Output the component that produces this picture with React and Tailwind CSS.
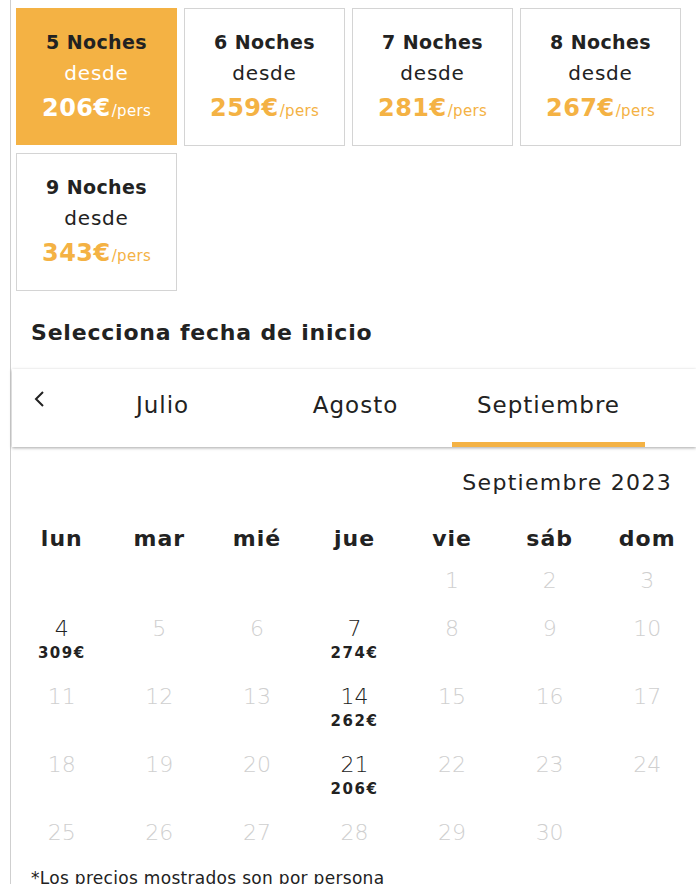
import { useState } from "react";

const nights = [
  { n: 5, price: 206 },
  { n: 6, price: 259 },
  { n: 7, price: 281 },
  { n: 8, price: 267 },
  { n: 9, price: 343 },
];

const prices = { 4: 309, 7: 274, 14: 262, 21: 206 };

const weeks = [
  [null, null, null, null, 1, 2, 3],
  [4, 5, 6, 7, 8, 9, 10],
  [11, 12, 13, 14, 15, 16, 17],
  [18, 19, 20, 21, 22, 23, 24],
  [25, 26, 27, 28, 29, 30, null],
];

const days = ["lun", "mar", "mié", "jue", "vie", "sáb", "dom"];
const months = ["Julio", "Agosto", "Septiembre"];

const App = () => {
  const [selected, setSelected] = useState(5);
  const [month, setMonth] = useState(2);

  return (
    <div className="min-h-[884px] bg-white text-[#222] font-['DejaVu_Sans',sans-serif]">
      <div className="ml-[10px] min-h-[884px] border-l border-[#cfcfcf] pt-[8px]">
        <div className="grid grid-cols-[161px_161px_161px_161px] gap-x-[7px] gap-y-[7px] pl-[5px]">
          {nights.map((item) => {
            const active = item.n === selected;
            return (
              <button
                key={item.n}
                onClick={() => setSelected(item.n)}
                className={
                  active
                    ? "flex h-[137px] flex-col items-center justify-center bg-[#f4b244] pb-[3px] text-white"
                    : "flex h-[138px] flex-col items-center justify-center border border-[#d4d4d4] bg-white pb-[3px]"
                }
              >
                <span className="text-[19px] font-bold leading-[31px] tracking-[0.4px] text-[#222]">
                  {item.n} Noches
                </span>
                <span className="text-[20px] leading-[31px] tracking-[0.8px]">desde</span>
                <span className={active ? "mt-[3px] flex items-baseline" : "mt-[3px] flex items-baseline text-[#f4b244]"}>
                  <span className="text-[24px] font-bold leading-[32px] tracking-[0.5px]">{item.price}€</span>
                  <span className="ml-[1px] text-[15px] tracking-[0.3px]">/pers</span>
                </span>
              </button>
            );
          })}
        </div>

        <h2 className="mt-[26px] pl-[20px] text-[22px] font-bold leading-[32px] tracking-[0.8px]">
          Selecciona fecha de inicio
        </h2>

        <div className="mt-[20px] ml-[1px] flex h-[78px] items-stretch bg-white shadow-[0_1px_3px_rgba(0,0,0,0.35)]">
          <button className="flex w-[54px] items-start justify-center pt-[20px]">
            <svg width="14" height="20" viewBox="0 0 14 20" fill="none" stroke="#222" strokeWidth="2">
              <path d="M11 3 L4 10 L11 17" />
            </svg>
          </button>
          {months.map((m, i) => (
            <button
              key={m}
              onClick={() => setMonth(i)}
              className={
                i === month
                  ? "flex w-[193px] items-center justify-center border-b-[5px] border-[#f4b244] text-[23px] tracking-[1px]"
                  : "flex w-[193px] items-center justify-center border-b-[5px] border-transparent text-[23px] tracking-[1px]"
              }
            >
              {m}
            </button>
          ))}
        </div>

        <div className="pl-[2px]">
          <p className="mt-[21px] pr-[24px] text-right text-[22px] leading-[30px] tracking-[1.3px]">
            Septiembre 2023
          </p>
          <div className="mt-[26px] grid grid-cols-7">
            {days.map((d) => (
              <div key={d} className="text-center text-[22px] font-bold leading-[30px] tracking-[1px]">
                {d}
              </div>
            ))}
          </div>
          <div className="mt-[12px]">
            {weeks.map((w, wi) => (
              <div key={wi} className="grid grid-cols-7">
                {w.map((d, di) => (
                  <div
                    key={di}
                    className={
                      w.some((x) => prices[x])
                        ? "flex h-[68px] flex-col items-center"
                        : "flex h-[48px] flex-col items-center"
                    }
                  >
                    {d && (
                      <span
                        className={
                          prices[d]
                            ? "text-[22px] font-extralight leading-[30px] text-[#222]"
                            : "text-[22px] font-extralight leading-[30px] text-[#cfcfcf]"
                        }
                      >
                        {d}
                      </span>
                    )}
                    {d && prices[d] && (
                      <span className="mt-[1px] text-[15px] font-bold leading-[16px] tracking-[1.5px]">{prices[d]}€</span>
                    )}
                  </div>
                ))}
              </div>
            ))}
          </div>
          <p className="pl-[18px] text-[17px] leading-[24px] tracking-[0.3px]">*Los precios mostrados son por persona</p>
        </div>
      </div>
    </div>
  );
};

export default App;
